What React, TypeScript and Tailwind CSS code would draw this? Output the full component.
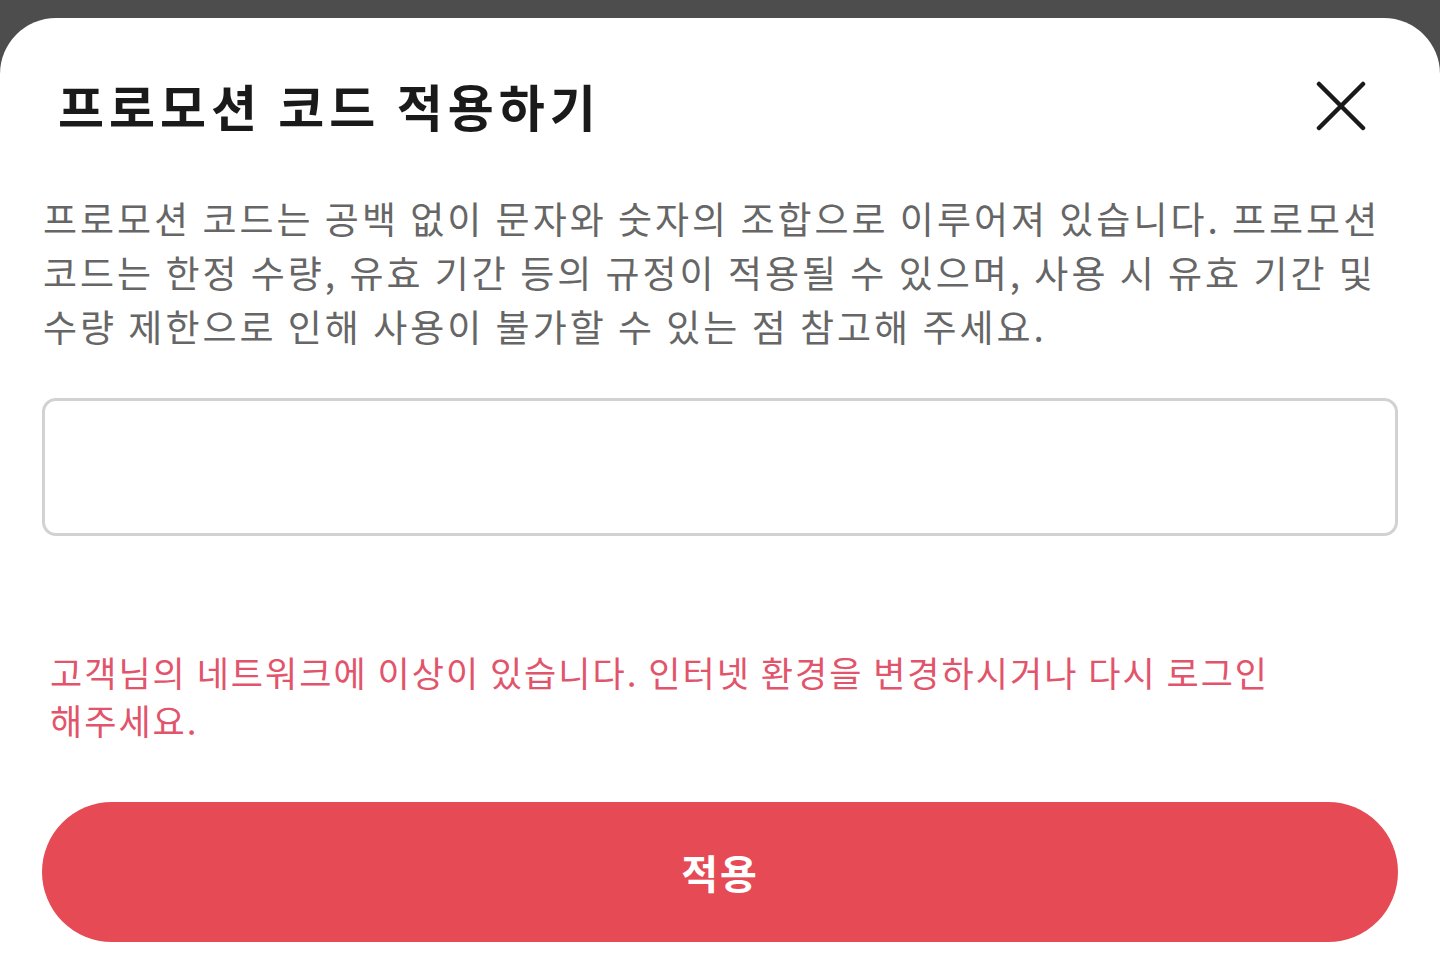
const font = { fontFamily: '"Noto Sans CJK KR", "Noto Sans", sans-serif' }

const CloseIcon = () => (
  <svg width="50" height="50" viewBox="0 0 50 50" fill="none">
    <path d="M3 3L47 47M47 3L3 47" stroke="#1a1a1a" strokeWidth="4.5" strokeLinecap="round" />
  </svg>
)

const PromoCodeSheet = () => {
  return (
    <div className="h-[973px] w-full bg-[#4d4d4d] pt-[18px]" style={font}>
      <div className="flex h-full flex-col rounded-t-[56px] bg-white">
        <div className="mt-[52px] flex h-[70px] items-center justify-between pl-[58px] pr-[74px]">
          <h1 className="text-[50px] font-bold leading-[70px] tracking-[5px] text-[#1a1a1a]">
            프로모션 코드 적용하기
          </h1>
          <button className="pt-[2px]">
            <CloseIcon />
          </button>
        </div>

        <p className="mt-[51px] break-keep px-[43px] text-[37px] leading-[54px] tracking-[3px] text-[#666666]">
          프로모션 코드는 공백 없이 문자와 숫자의 조합으로 이루어져 있습니다. 프로모션 코드는 한정 수량, 유효 기간 등의 규정이 적용될 수 있으며, 사용 시 유효 기간 및 수량 제한으로 인해 사용이 불가할 수 있는 점 참고해 주세요.
        </p>

        <div className="mx-[42px] mt-[45px]">
          <input
            type="text"
            className="h-[138px] w-full rounded-[14px] border-[3px] border-[#d2d2d2] px-[36px] text-[36px] outline-none"
          />
        </div>

        <p className="mt-[112px] break-keep pl-[50px] pr-[80px] text-[35px] leading-[48px] tracking-[2px] text-[#e2546b]">
          고객님의 네트워크에 이상이 있습니다. 인터넷 환경을 변경하시거나 다시 로그인 해주세요.
        </p>

        <div className="mx-[42px] mt-[58px]">
          <button className="flex h-[140px] w-full items-center justify-center rounded-full bg-[#e64b55] text-[40px] font-bold tracking-[2px] text-white">
            적용
          </button>
        </div>
      </div>
    </div>
  )
}

export default function App() {
  return <PromoCodeSheet />
}
